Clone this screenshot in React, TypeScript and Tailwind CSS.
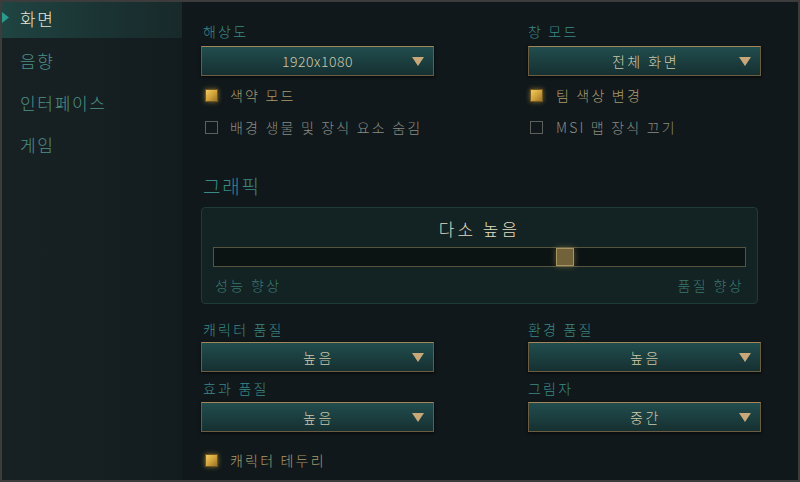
import React from "react";

const F = "font-['Noto_Sans_CJK_KR','Noto_Sans',sans-serif]";

function Dropdown({ value, latin = false, className = "" }: { value: string; latin?: boolean; className?: string }) {
  return (
    <div
      className={`relative h-[30px] w-[233px] border border-[#6a5d42] border-t-[#a3875a] bg-gradient-to-b from-[#214d4e] to-[#163031] shadow-[0_1px_3px_rgba(0,0,0,0.7)] flex items-center justify-center ${className}`}
    >
      <span
        className={`text-[14px] leading-[20px] text-[#cdc7a8] ${latin ? "tracking-[0.5px]" : "tracking-[2.5px] pl-[2px]"}`}
      >
        {value}
      </span>
      <svg className="absolute right-[9px] top-[10px]" width="12" height="9" viewBox="0 0 12 9">
        <polygon points="0,0 12,0 6,9" fill="#c8a878" />
      </svg>
    </div>
  );
}

function Check({
  checked,
  label,
  right = false,
  className = "",
}: {
  checked: boolean;
  label: string;
  right?: boolean;
  className?: string;
}) {
  return (
    <div className={`flex items-center h-[20px] ${right ? "pl-[2px]" : "pl-[4px]"} ${className}`}>
      {checked ? (
        <div className="w-[13px] h-[13px] border border-[#6f5520] bg-gradient-to-br from-[#f0cc5e] via-[#d3a43c] to-[#9a7426] shadow-[0_0_5px_rgba(210,165,60,0.55)]" />
      ) : (
        <div className="w-[13px] h-[13px] border border-[#5e605c]" />
      )}
      <span
        className={`${right ? "ml-[13px]" : "ml-[12px]"} text-[14px] leading-[20px] tracking-[2.2px] ${
          checked ? "text-[#a99a6e]" : "text-[#8a8c84]"
        }`}
      >
        {label}
      </span>
    </div>
  );
}

function Label({ text, right = false, className = "" }: { text: string; right?: boolean; className?: string }) {
  return (
    <div
      className={`h-[20px] ${right ? "pl-0" : "pl-[2px]"} text-[14px] leading-[20px] tracking-[2.2px] text-[#3a8985] ${className}`}
    >
      {text}
    </div>
  );
}

export default function App() {
  const items = ["화면", "음향", "인터페이스", "게임"];
  return (
    <div className={`w-[800px] h-[482px] border-2 border-[#3c3c3c] flex bg-[#10181b] overflow-hidden font-light ${F}`}>
      <div className="w-[180px] h-full bg-gradient-to-r from-[#172123] via-[#162022] to-[#121b1d] flex flex-col">
        {items.map((it, i) => (
          <div
            key={it}
            className={`relative h-[36px] flex items-center pl-[18px] ${i > 0 ? "mt-[6px]" : ""} ${
              i === 0 ? "bg-gradient-to-r from-[#1f4442] via-[#1b3534] to-[#18292a]" : ""
            }`}
          >
            {i === 0 && (
              <svg className="absolute left-0 top-[10px]" width="7" height="11" viewBox="0 0 7 11">
                <polygon points="0,0 7,5.5 0,11" fill="#2a9a8e" />
              </svg>
            )}
            <span
              className={`text-[17px] leading-[24px] tracking-[1.7px] -mt-[3px] ${
                i === 0 ? "text-[#e6e4d4]" : "text-[#4e9087]"
              }`}
            >
              {it}
            </span>
          </div>
        ))}
      </div>

      <div className="flex-1 pl-[19px] pt-[19px] flex flex-col">
        <div className="flex gap-[94px]">
          <div className="flex flex-col">
            <Label text="해상도" />
            <Dropdown value="1920x1080" latin className="mt-[5px]" />
            <Check checked label="색약 모드" className="mt-[9px]" />
            <Check checked={false} label="배경 생물 및 장식 요소 숨김" className="mt-[12px]" />
          </div>
          <div className="flex flex-col">
            <Label text="창 모드" right />
            <Dropdown value="전체 화면" className="mt-[5px]" />
            <Check checked right label="팀 색상 변경" className="mt-[9px]" />
            <Check checked={false} right label="MSI 맵 장식 끄기" className="mt-[12px]" />
          </div>
        </div>

        <div className="mt-[36px] h-[26px] pl-[2px] text-[19px] leading-[26px] tracking-[1.8px] text-[#3a8985]">그래픽</div>

        <div className="mt-[8px] w-[557px] h-[97px] rounded-[4px] border border-[#1f3b39] bg-[#132223] px-[11px] pt-[9px] flex flex-col">
          <div className="h-[24px] text-center text-[17px] leading-[24px] tracking-[3px] text-[#e2dcc0]">다소 높음</div>
          <div className="relative mt-[6px] h-[20px] border border-[#55553f] bg-[#0c1313]">
            <div className="absolute left-[342px] top-0 w-[18px] h-[18px] border border-[#a89462] bg-[#72623a] shadow-[0_0_6px_rgba(200,170,90,0.45)]" />
          </div>
          <div className="mt-[8px] flex justify-between text-[14px] leading-[20px] tracking-[2.4px] text-[#3a7670] pl-[2px] pr-[2px]">
            <span>성능 향상</span>
            <span>품질 향상</span>
          </div>
        </div>

        <div className="mt-[15px] flex gap-[94px]">
          <div className="flex flex-col">
            <Label text="캐릭터 품질" />
            <Dropdown value="높음" className="mt-[3px]" />
            <Label text="효과 품질" className="mt-[6px]" />
            <Dropdown value="높음" className="mt-[4px]" />
            <Check checked label="캐릭터 테두리" className="mt-[18px]" />
          </div>
          <div className="flex flex-col">
            <Label text="환경 품질" right />
            <Dropdown value="높음" className="mt-[3px]" />
            <Label text="그림자" right className="mt-[6px]" />
            <Dropdown value="중간" className="mt-[4px]" />
          </div>
        </div>
      </div>
    </div>
  );
}
